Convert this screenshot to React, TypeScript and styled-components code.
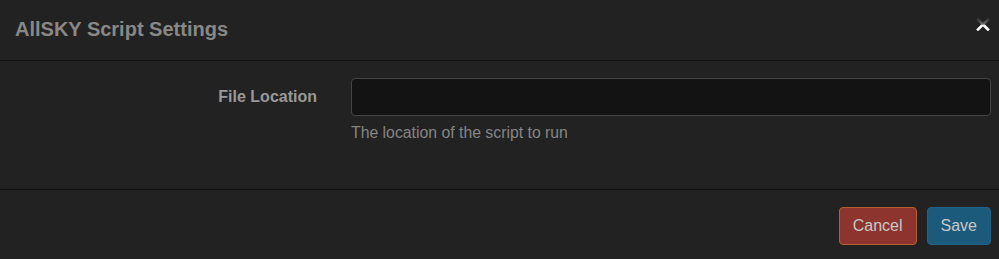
import React from 'react';
import styled, { createGlobalStyle } from 'styled-components';

const GlobalStyle = createGlobalStyle`
  html, body {
    margin: 0;
    padding: 0;
    background: #222222;
  }
  body {
    font-family: 'Liberation Sans', Arial, Helvetica, sans-serif;
    font-size: 16px;
  }
`;

const Modal = styled.div`
  width: 999px;
  height: 259px;
  background: #222222;
  display: flex;
  flex-direction: column;
`;

const Header = styled.div`
  height: 61px;
  box-sizing: border-box;
  padding: 0 9px 0 15px;
  display: flex;
  align-items: center;
  justify-content: space-between;
  border-bottom: 1px solid #0f0f0f;
`;

const Title = styled.h4`
  margin: -3px 0 0;
  font-size: 20px;
  font-weight: bold;
  color: #888888;
  line-height: 1;
`;

const Close = styled.button`
  background: none;
  border: 0;
  padding: 0;
  margin-top: -11px;
  display: flex;
  cursor: pointer;
`;

const Body = styled.div`
  height: 129px;
  box-sizing: border-box;
  padding: 17px 8px 0 0;
  border-bottom: 1px solid #0f0f0f;
`;

const FormRow = styled.div`
  display: grid;
  grid-template-columns: 317px 1fr;
  column-gap: 34px;
  align-items: start;
`;

const Label = styled.label`
  text-align: right;
  font-weight: bold;
  color: #999999;
  line-height: 38px;
`;

const Input = styled.input`
  box-sizing: border-box;
  width: 100%;
  height: 38px;
  background: #131313;
  border: 1px solid #454545;
  border-radius: 4px;
  color: #cccccc;
  padding: 0 12px;
  font: inherit;
  outline: none;
`;

const Help = styled.div`
  grid-column: 2;
  margin-top: 6px;
  color: #858585;
  font-size: 15.8px;
  line-height: 22px;
`;

const Footer = styled.div`
  flex: 1;
  display: flex;
  justify-content: flex-end;
  align-items: flex-start;
  gap: 10px;
  padding: 17px 8px 0 0;
`;

const Button = styled.button<{ $variant: 'danger' | 'primary' }>`
  height: 38px;
  box-sizing: border-box;
  padding: 0 13px;
  border-radius: 4px;
  font: inherit;
  font-size: 16px;
  color: #c8c8c8;
  cursor: pointer;
  background: ${(p) => (p.$variant === 'danger' ? '#8d342f' : '#1c5a7c')};
  border: 1px solid ${(p) => (p.$variant === 'danger' ? '#b3602b' : '#1d6488')};
`;

const CloseIcon = () => (
  <svg width='14' height='13' viewBox='0 0 14 13'>
    <defs>
      <linearGradient id='closeFade' x1='0' y1='0' x2='0' y2='1'>
        <stop offset='0' stopColor='#3a3a3a' />
        <stop offset='0.45' stopColor='#6a6a6a' />
        <stop offset='0.6' stopColor='#ffffff' />
        <stop offset='1' stopColor='#ffffff' />
      </linearGradient>
    </defs>
    <path
      d='M2 1.5 L12 11.5 M12 1.5 L2 11.5'
      stroke='url(#closeFade)'
      strokeWidth='2.6'
      strokeLinecap='square'
      fill='none'
    />
  </svg>
);

const App: React.FC = () => {
  return (
    <>
      <GlobalStyle />
      <Modal>
        <Header>
          <Title>AllSKY Script Settings</Title>
          <Close aria-label='Close'>
            <CloseIcon />
          </Close>
        </Header>
        <Body>
          <FormRow>
            <Label htmlFor='file-location'>File Location</Label>
            <Input id='file-location' type='text' />
            <Help>The location of the script to run</Help>
          </FormRow>
        </Body>
        <Footer>
          <Button $variant='danger'>Cancel</Button>
          <Button $variant='primary'>Save</Button>
        </Footer>
      </Modal>
    </>
  );
};

export default App;
